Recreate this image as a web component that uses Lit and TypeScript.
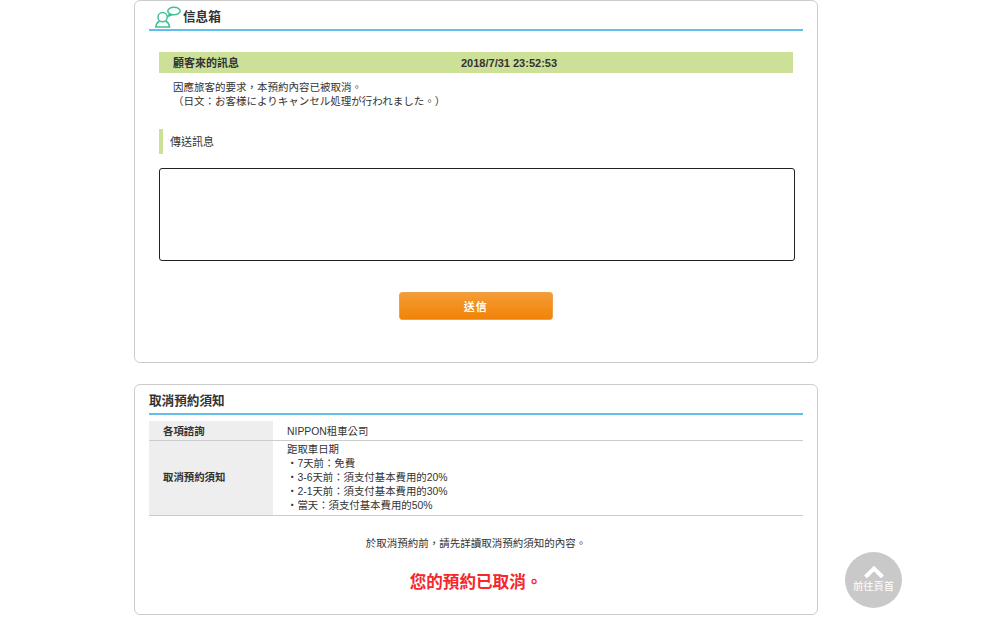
import { LitElement, html, css } from "lit";
import { customElement } from "lit/decorators.js";

@customElement("app-root")
export class AppRoot extends LitElement {
  static styles = css`
    :host {
      display: block;
      position: relative;
      height: 623px;
      overflow: hidden;
      background: #fff;
      color: #333;
      font-family: "Liberation Sans", "Noto Sans CJK TC", sans-serif;
      font-size: 10.5px;
      line-height: 14px;
    }
    .page { width: 684px; margin-left: 134px; display: flex; flex-direction: column; gap: 21px; }
    .card {
      box-sizing: border-box;
      border: 1px solid #ccc;
      border-radius: 6px;
      padding: 0 14px;
      background: #fff;
    }
    .inbox { height: 363px; }
    .notice { height: 231px; }
    .head {
      display: flex;
      align-items: center;
      gap: 2px;
      height: 24px;
      padding-top: 4px;
      border-bottom: 2px solid #62bfeb;
      font-size: 12.6px;
      font-weight: 700;
    }
    .inbox .head { padding-left: 6px; }
    .head svg { display: block; }
    .msg-bar {
      margin: 21px 10px 0;
      height: 21px;
      display: grid;
      grid-template-columns: 288px 1fr;
      align-items: center;
      padding-left: 14px;
      background: #cde097;
      font-size: 11px;
      font-weight: 700;
    }
    .msg { margin: 7px 24px 0; }
    .send-label {
      margin: 21px 10px 0;
      height: 25px;
      display: flex;
      align-items: center;
      border-left: 4px solid #cde097;
      padding-left: 7px;
      font-size: 11px;
    }
    textarea {
      display: block;
      box-sizing: border-box;
      width: 636px;
      height: 93px;
      margin: 14px 0 0 10px;
      border: 1px solid #222;
      border-radius: 3px;
      background: #fff;
      resize: none;
      outline: none;
    }
    .actions { display: flex; justify-content: center; margin-top: 31px; }
    button {
      width: 153.5px;
      height: 28px;
      margin-right: 0.5px;
      padding: 0;
      border: 1px solid #eda24b;
      border-radius: 3px;
      background: linear-gradient(#f59c36, #f08307);
      color: #fff;
      font: 700 11px "Liberation Sans", "Noto Sans CJK TC", sans-serif;
      letter-spacing: 1px;
    }
    table { width: 100%; border-collapse: collapse; margin-top: 6px; font-size: 10.4px; }
    th, td { padding: 2px 14px; border-bottom: 1px solid #ccc; text-align: left; vertical-align: middle; }
    .first th, .first td { padding: 4px 14px 1px; }
    th { width: 96px; background: #eee; font-weight: 700; }
    .note { margin-top: 20px; text-align: center; }
    .cancelled {
      margin-top: 23px;
      text-align: center;
      color: #f5262c;
      font-size: 16.6px;
      font-weight: 700;
      line-height: 20px;
    }
    .top {
      position: absolute;
      left: 845px;
      top: 552px;
      width: 57px;
      height: 56px;
      border-radius: 50%;
      background: #c9c9c9;
      color: #fff;
      display: flex;
      flex-direction: column;
      align-items: center;
      font-size: 10.3px;
      line-height: 12px;
    }
    .top svg { display: block; margin-top: 13px; margin-bottom: 3px; }
  `;

  render() {
    return html`
      <div class="page">
        <section class="card inbox">
          <div class="head">
            <svg width="26" height="22" viewBox="0 0 26 22" fill="none" stroke="#3fc09a" stroke-width="1.5">
              <ellipse cx="19" cy="5" rx="6.2" ry="3.7" />
              <path d="M15 7.8 L12.5 10.5 L17.5 8.6" />
              <circle cx="7.6" cy="11.2" r="4.6" />
              <path d="M4.6 15 C2.6 16 1.2 18 .8 21 H14.6 C14.2 18 12.6 16 10.6 15" />
            </svg>
            <span>信息箱</span>
          </div>
          <div class="msg-bar"><span>顧客來的訊息</span><span>2018/7/31 23:52:53</span></div>
          <div class="msg">因應旅客的要求&#xFF0C;本預約內容已被取消。<br />&#xFF08;日文&#xFF1A;お客様によりキャンセル処理が行われました。&#xFF09;</div>
          <div class="send-label">傳送訊息</div>
          <textarea></textarea>
          <div class="actions"><button>送信</button></div>
        </section>
        <section class="card notice">
          <div class="head"><span>取消預約須知</span></div>
          <table>
            <tr class="first"><th>各項諮詢</th><td>NIPPON租車公司</td></tr>
            <tr>
              <th>取消預約須知</th>
              <td>距取車日期<br />・7天前&#xFF1A;免費<br />・3-6天前&#xFF1A;須支付基本費用的20%<br />・2-1天前&#xFF1A;須支付基本費用的30%<br />・當天&#xFF1A;須支付基本費用的50%</td>
            </tr>
          </table>
          <div class="note">於取消預約前&#xFF0C;請先詳讀取消預約須知的內容。</div>
          <div class="cancelled">您的預約已取消。</div>
        </section>
      </div>
      <div class="top">
        <svg width="20" height="13" viewBox="0 0 20 13" fill="none" stroke="#fff" stroke-width="4"><path d="M1.5 12 L10 3.5 L18.5 12" /></svg>
        <span>前往頁首</span>
      </div>
    `;
  }
}
